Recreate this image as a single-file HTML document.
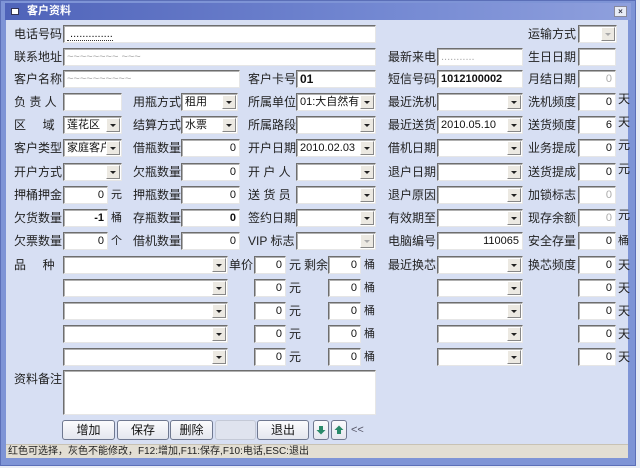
<!DOCTYPE html>
<html><head><meta charset="utf-8">
<style>
*{margin:0;padding:0;box-sizing:border-box}
body{width:640px;height:468px;background:#e9edf5;font-family:"Liberation Sans","Noto Sans CJK SC","WenQuanYi Zen Hei",sans-serif;position:relative;overflow:hidden}
#win{position:absolute;left:0;top:0;width:636px;height:466px;background:#7e94d6;border:1px solid #5b6fb8}
#title{position:absolute;left:5px;top:3px;width:626px;height:17px;background:linear-gradient(90deg,#4f63b9,#7388d2 60%,#8fa0dd);color:#fff;font-size:11px;line-height:17px;padding-left:22px;font-weight:bold}
#title .ic{position:absolute;left:6px;top:5px;width:8px;height:7px;background:#fff;border:1px solid #335}
#close{position:absolute;right:4px;top:3px;width:13px;height:11px;background:#e8ecf6;border:1px solid #889;font-size:8px;line-height:9px;text-align:center;color:#334}
#body{position:absolute;left:6px;top:20px;width:622px;height:424px;background:#d7dff3}
.l{position:absolute;font-size:12px;line-height:18px;color:#222;white-space:nowrap}
.i{position:absolute;height:18px;background:#fff;border:1px solid;border-color:#6e6e6e #e6e6e6 #e6e6e6 #6e6e6e;box-shadow:inset 1px 1px 0 #b0b0b0;font-size:11px;line-height:16px;padding:0 3px;white-space:nowrap;overflow:hidden;color:#111}
.r{text-align:right}
.g{color:#aaa}
.b{font-weight:bold}
.c .d{position:absolute;right:1px;top:1px;width:14px;height:14px;background:#ece9e2;border:1px solid;border-color:#fff #888 #888 #fff}
.c .d:after{content:"";position:absolute;left:3px;top:5px;border-left:3px solid transparent;border-right:3px solid transparent;border-top:3px solid #222}
.c .d.x:after{border-top-color:#aaa}
.btn{position:absolute;top:420px;height:20px;background:linear-gradient(#fbfbfd,#e4e6ee);border:1px solid #6f7890;border-radius:3px;font-size:12px;line-height:18px;text-align:center;color:#111}
#status{position:absolute;left:6px;top:444px;width:622px;height:14px;background:#e2ded3;border-top:1px solid #c8c2b4;font-size:10px;line-height:13px;padding-left:2px;color:#222}
</style></head><body>
<div id="win"></div>
<div id="title"><span class="ic"></span>客户资料<div id="close">×</div></div>
<div id="body"></div>
<div id="status">红色可选择，灰色不能修改，F12:增加,F11:保存,F10:电话,ESC:退出</div>

<!-- row1 y25 -->
<div class="l" style="left:14px;top:25px">电话号码</div>
<div class="i" style="left:63px;top:25px;width:313px"><span style="border-bottom:1px dotted #333">&nbsp;..............</span></div>
<div class="l" style="left:528px;top:25px">运输方式</div>
<div class="i c" style="left:578px;top:25px;width:39px"><span class="d x"></span></div>
<!-- row2 y48 -->
<div class="l" style="left:14px;top:48px">联系地址</div>
<div class="i g" style="left:63px;top:48px;width:313px">~~~~~~~~ ~~~</div>
<div class="l" style="left:388px;top:48px">最新来电</div>
<div class="i g" style="left:437px;top:48px;width:86px">...........</div>
<div class="l" style="left:528px;top:48px">生日日期</div>
<div class="i" style="left:578px;top:48px;width:38px"></div>
<!-- row3 y70 -->
<div class="l" style="left:14px;top:70px">客户名称</div>
<div class="i g" style="left:63px;top:70px;width:177px">~~~~~~~~~~</div>
<div class="l" style="left:248px;top:70px">客户卡号</div>
<div class="i b" style="left:296px;top:70px;width:80px;font-size:12px">01</div>
<div class="l" style="left:388px;top:70px">短信号码</div>
<div class="i b" style="left:437px;top:70px;width:86px">1012100002</div>
<div class="l" style="left:528px;top:70px">月结日期</div>
<div class="i r g" style="left:578px;top:70px;width:38px">0</div>
<!-- row4 y93 -->
<div class="l" style="left:14px;top:93px">负 责 人</div>
<div class="i" style="left:63px;top:93px;width:59px"></div>
<div class="l" style="left:133px;top:93px">用瓶方式</div>
<div class="i c" style="left:181px;top:93px;width:57px">租用<span class="d"></span></div>
<div class="l" style="left:248px;top:93px">所属单位</div>
<div class="i c" style="left:296px;top:93px;width:80px">01:大自然有<span class="d"></span></div>
<div class="l" style="left:388px;top:93px">最近洗机</div>
<div class="i c" style="left:437px;top:93px;width:86px"><span class="d"></span></div>
<div class="l" style="left:528px;top:93px">洗机频度</div>
<div class="i r" style="left:578px;top:93px;width:38px">0</div>
<div class="l" style="left:618px;top:90px">天</div>
<!-- row5 y116 -->
<div class="l" style="left:14px;top:116px">区&nbsp;&nbsp;&nbsp;&nbsp;&nbsp;域</div>
<div class="i c" style="left:63px;top:116px;width:59px">莲花区<span class="d"></span></div>
<div class="l" style="left:133px;top:116px">结算方式</div>
<div class="i c" style="left:181px;top:116px;width:57px">水票<span class="d"></span></div>
<div class="l" style="left:248px;top:116px">所属路段</div>
<div class="i c" style="left:296px;top:116px;width:80px"><span class="d"></span></div>
<div class="l" style="left:388px;top:116px">最近送货</div>
<div class="i c" style="left:437px;top:116px;width:86px">2010.05.10<span class="d"></span></div>
<div class="l" style="left:528px;top:116px">送货频度</div>
<div class="i r" style="left:578px;top:116px;width:38px">6</div>
<div class="l" style="left:618px;top:113px">天</div>
<!-- row6 y139 -->
<div class="l" style="left:14px;top:139px">客户类型</div>
<div class="i c" style="left:63px;top:139px;width:59px">家庭客户<span class="d"></span></div>
<div class="l" style="left:133px;top:139px">借瓶数量</div>
<div class="i r" style="left:181px;top:139px;width:59px">0</div>
<div class="l" style="left:248px;top:139px">开户日期</div>
<div class="i c" style="left:296px;top:139px;width:80px">2010.02.03<span class="d"></span></div>
<div class="l" style="left:388px;top:139px">借机日期</div>
<div class="i c" style="left:437px;top:139px;width:86px"><span class="d"></span></div>
<div class="l" style="left:528px;top:139px">业务提成</div>
<div class="i r" style="left:578px;top:139px;width:38px">0</div>
<div class="l" style="left:618px;top:136px">元</div>
<!-- row7 y163 -->
<div class="l" style="left:14px;top:163px">开户方式</div>
<div class="i c" style="left:63px;top:163px;width:59px"><span class="d"></span></div>
<div class="l" style="left:133px;top:163px">欠瓶数量</div>
<div class="i r" style="left:181px;top:163px;width:59px">0</div>
<div class="l" style="left:248px;top:163px">开 户 人</div>
<div class="i c" style="left:296px;top:163px;width:80px"><span class="d"></span></div>
<div class="l" style="left:388px;top:163px">退户日期</div>
<div class="i c" style="left:437px;top:163px;width:86px"><span class="d"></span></div>
<div class="l" style="left:528px;top:163px">送货提成</div>
<div class="i r" style="left:578px;top:163px;width:38px">0</div>
<div class="l" style="left:618px;top:160px">元</div>
<!-- row8 y186 -->
<div class="l" style="left:14px;top:186px">押桶押金</div>
<div class="i r" style="left:63px;top:186px;width:45px">0</div>
<div class="l" style="left:111px;top:186px;font-size:11px">元</div>
<div class="l" style="left:133px;top:186px">押瓶数量</div>
<div class="i r" style="left:181px;top:186px;width:59px">0</div>
<div class="l" style="left:248px;top:186px">送 货 员</div>
<div class="i c" style="left:296px;top:186px;width:80px"><span class="d"></span></div>
<div class="l" style="left:388px;top:186px">退户原因</div>
<div class="i c" style="left:437px;top:186px;width:86px"><span class="d"></span></div>
<div class="l" style="left:528px;top:186px">加锁标志</div>
<div class="i r g" style="left:578px;top:186px;width:38px">0</div>
<!-- row9 y209 -->
<div class="l" style="left:14px;top:209px">欠货数量</div>
<div class="i r b" style="left:63px;top:209px;width:45px">-1</div>
<div class="l" style="left:111px;top:209px;font-size:11px">桶</div>
<div class="l" style="left:133px;top:209px">存瓶数量</div>
<div class="i r b" style="left:181px;top:209px;width:59px">0</div>
<div class="l" style="left:248px;top:209px">签约日期</div>
<div class="i c" style="left:296px;top:209px;width:80px"><span class="d"></span></div>
<div class="l" style="left:388px;top:209px">有效期至</div>
<div class="i c" style="left:437px;top:209px;width:86px"><span class="d"></span></div>
<div class="l" style="left:528px;top:209px">现存余额</div>
<div class="i r g" style="left:578px;top:209px;width:38px">0</div>
<div class="l" style="left:618px;top:206px">元</div>
<!-- row10 y232 -->
<div class="l" style="left:14px;top:232px">欠票数量</div>
<div class="i r" style="left:63px;top:232px;width:45px">0</div>
<div class="l" style="left:111px;top:232px;font-size:11px">个</div>
<div class="l" style="left:133px;top:232px">借机数量</div>
<div class="i r" style="left:181px;top:232px;width:59px">0</div>
<div class="l" style="left:248px;top:232px">VIP 标志</div>
<div class="i c" style="left:296px;top:232px;width:80px"><span class="d x"></span></div>
<div class="l" style="left:388px;top:232px">电脑编号</div>
<div class="i r" style="left:437px;top:232px;width:86px">110065</div>
<div class="l" style="left:528px;top:232px">安全存量</div>
<div class="i r" style="left:578px;top:232px;width:38px">0</div>
<div class="l" style="left:618px;top:232px;font-size:11px">桶</div>
<!-- row11 y256 -->
<div class="l" style="left:14px;top:256px">品&nbsp;&nbsp;&nbsp;&nbsp;&nbsp;种</div>
<div class="l" style="left:229px;top:256px">单价</div>
<div class="l" style="left:304px;top:256px">剩余</div>
<div class="l" style="left:388px;top:256px">最近换芯</div>
<div class="l" style="left:528px;top:256px">换芯频度</div>

<div class="i c" style="left:63px;top:256px;width:165px"><span class="d"></span></div>
<div class="i r" style="left:254px;top:256px;width:32px">0</div><div class="l" style="left:289px;top:256px">元</div>
<div class="i r" style="left:328px;top:256px;width:33px">0</div><div class="l" style="left:364px;top:256px;font-size:11px">桶</div>
<div class="i c" style="left:437px;top:256px;width:86px"><span class="d"></span></div>
<div class="i r" style="left:578px;top:256px;width:38px">0</div><div class="l" style="left:618px;top:256px">天</div>

<div class="i c" style="left:63px;top:279px;width:165px"><span class="d"></span></div>
<div class="i r" style="left:254px;top:279px;width:32px">0</div><div class="l" style="left:289px;top:279px">元</div>
<div class="i r" style="left:328px;top:279px;width:33px">0</div><div class="l" style="left:364px;top:279px;font-size:11px">桶</div>
<div class="i c" style="left:437px;top:279px;width:86px"><span class="d"></span></div>
<div class="i r" style="left:578px;top:279px;width:38px">0</div><div class="l" style="left:618px;top:279px">天</div>

<div class="i c" style="left:63px;top:302px;width:165px"><span class="d"></span></div>
<div class="i r" style="left:254px;top:302px;width:32px">0</div><div class="l" style="left:289px;top:302px">元</div>
<div class="i r" style="left:328px;top:302px;width:33px">0</div><div class="l" style="left:364px;top:302px;font-size:11px">桶</div>
<div class="i c" style="left:437px;top:302px;width:86px"><span class="d"></span></div>
<div class="i r" style="left:578px;top:302px;width:38px">0</div><div class="l" style="left:618px;top:302px">天</div>

<div class="i c" style="left:63px;top:325px;width:165px"><span class="d"></span></div>
<div class="i r" style="left:254px;top:325px;width:32px">0</div><div class="l" style="left:289px;top:325px">元</div>
<div class="i r" style="left:328px;top:325px;width:33px">0</div><div class="l" style="left:364px;top:325px;font-size:11px">桶</div>
<div class="i c" style="left:437px;top:325px;width:86px"><span class="d"></span></div>
<div class="i r" style="left:578px;top:325px;width:38px">0</div><div class="l" style="left:618px;top:325px">天</div>

<div class="i c" style="left:63px;top:348px;width:165px"><span class="d"></span></div>
<div class="i r" style="left:254px;top:348px;width:32px">0</div><div class="l" style="left:289px;top:348px">元</div>
<div class="i r" style="left:328px;top:348px;width:33px">0</div><div class="l" style="left:364px;top:348px;font-size:11px">桶</div>
<div class="i c" style="left:437px;top:348px;width:86px"><span class="d"></span></div>
<div class="i r" style="left:578px;top:348px;width:38px">0</div><div class="l" style="left:618px;top:348px">天</div>

<!-- remarks -->
<div class="l" style="left:14px;top:370px">资料备注</div>
<div class="i" style="left:63px;top:370px;width:313px;height:45px"></div>

<!-- buttons -->
<div class="btn" style="left:62px;width:53px">增加</div>
<div class="btn" style="left:117px;width:52px">保存</div>
<div class="btn" style="left:170px;width:43px">删除</div>
<div class="btn" style="left:215px;width:41px;background:#dfe3ee;border-color:#c4c9d6"></div>
<div class="btn" style="left:257px;width:52px">退出</div>
<div class="btn" style="left:313px;width:16px"><svg width="14" height="18" viewBox="0 0 14 18"><path d="M5 5h4v4h2.5L7 13.5 2.5 9H5z" fill="#2a8a6a"/></svg></div>
<div class="btn" style="left:331px;width:16px"><svg width="14" height="18" viewBox="0 0 14 18"><path d="M5 13h4V9h2.5L7 4.5 2.5 9H5z" fill="#2a8a6a"/></svg></div>
<div class="l" style="left:351px;top:421px;font-size:11px;color:#556">&lt;&lt;</div>
</body></html>
